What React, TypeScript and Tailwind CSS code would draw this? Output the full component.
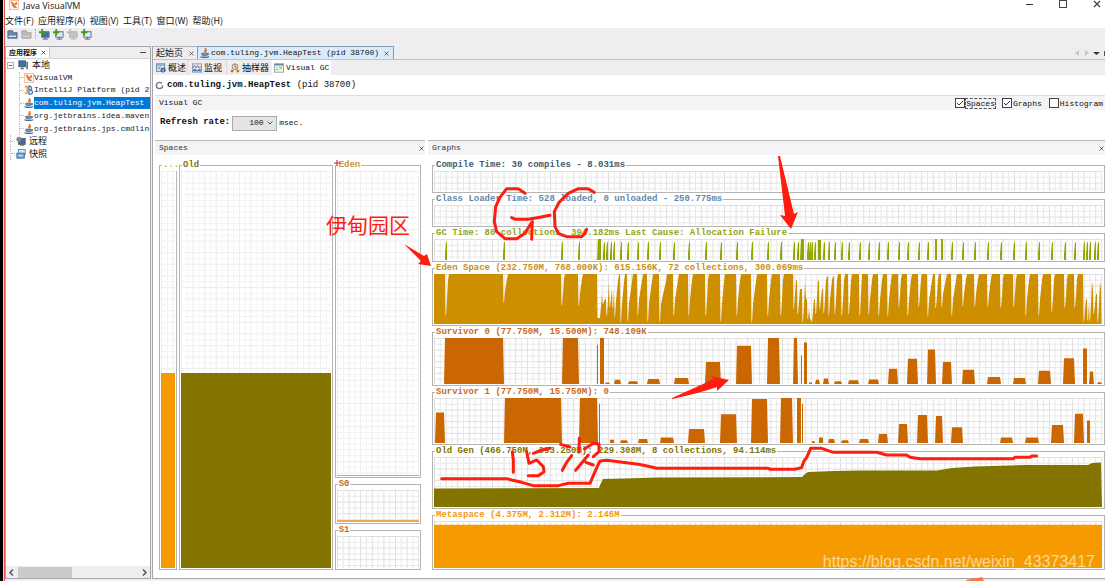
import type { ReactNode } from 'react';

const menus = ['文件(F)', '应用程序(A)', '视图(V)', '工具(T)', '窗口(W)', '帮助(H)'];

// depth of the free space, in percent from the top of the plot
const edenPoints = [
  [0, 0], [9, 0], [12, 83], [15, 0], [69, 0], [70, 57], [74, 0], [127, 0], [128, 63], [131, 0], [144, 0], [145, 63],
  [149, 0], [163, 0], [164, 88], [166, 88], [168, 39], [169, 60], [171, 50], [173, 84], [175, 17], [176, 66], [178, 29],
  [179, 68], [180, 32], [181, 86], [185, 0], [186, 0], [187, 97], [191, 0], [193, 0], [194, 95], [199, 0], [203, 0],
  [204, 83], [209, 0], [212, 0], [214, 95], [219, 0], [224, 0], [226, 96], [233, 0], [238, 0], [240, 83], [245, 0],
  [253, 0], [255, 83], [259, 0], [270, 0], [272, 83], [275, 0], [285, 0], [287, 95], [291, 0], [301, 0], [303, 83],
  [307, 0], [317, 0], [318, 97], [323, 0], [332, 0], [334, 83], [338, 0], [346, 0], [347, 83], [350, 0], [358, 0],
  [360, 70], [363, 14], [364, 80], [366, 30], [369, 97], [372, 50], [374, 90], [375, 70], [376, 88], [378, 97],
  [380, 50], [382, 80], [385, 15], [386, 70], [388, 30], [390, 78], [393, 5], [395, 83], [399, 5], [401, 80], [404, 0],
  [407, 0], [408, 83], [411, 0], [413, 0], [415, 80], [418, 0], [424, 0], [426, 83], [428, 0], [433, 0], [435, 80],
  [439, 0], [444, 0], [445, 83], [449, 0], [453, 0], [454, 83], [458, 0], [463, 0], [465, 67], [468, 0], [473, 0],
  [474, 83], [478, 0], [483, 0], [485, 65], [488, 0], [493, 0], [494, 85], [499, 0], [501, 0], [502, 68], [505, 0],
  [507, 0], [508, 65], [513, 0], [517, 0], [518, 83], [523, 0], [527, 0], [529, 65], [533, 0], [539, 0], [541, 65],
  [545, 0], [553, 0], [554, 65], [558, 0], [566, 0], [567, 67], [570, 0], [578, 0], [580, 65], [583, 0], [591, 0],
  [592, 83], [596, 0], [604, 0], [605, 83], [609, 0], [616, 0], [618, 75], [621, 0], [629, 0], [631, 67], [634, 0],
  [640, 0], [641, 67], [644, 0], [649, 0], [650, 95], [652, 50], [654, 93], [655, 55], [656, 95], [659, 30], [660, 80],
  [662, 40], [664, 97], [667, 30], [668, 100],
];

const oldPoints = [
  [0, 63], [165, 62], [166, 56], [169, 44], [190, 43], [224, 41], [368, 40], [371, 34], [374, 30], [400, 28], [426, 27],
  [503, 27], [518, 22], [541, 19], [591, 16], [654, 16], [658, 12], [667, 11], [668, 100],
];

const gcSpikes = [
  12, 70, 128, 145, 170, 173, 177, 180, 187, 194, 204, 214, 226, 240, 255, 272, 287, 303, 318, 334, 347, 360, 364, 374,
  376, 378, 381, 386, 390, 395, 401, 408, 415, 426, 435, 445, 454, 465, 474, 485, 494, 502, 508, 518, 529, 541, 554,
  567, 580, 592, 605, 618, 631, 641, 650, 653, 656, 661, 664,
];

// [from, to, height %]
const survivor0 = [
  [10, 70, 100], [128, 145, 100], [163, 164, 85], [166, 170, 100], [171, 176, 3], [180, 187, 9], [194, 204, 6],
  [213, 226, 11], [240, 255, 13], [271, 287, 48], [302, 318, 83], [333, 346, 100], [359, 364, 100], [367, 368, 62],
  [370, 373, 90], [375, 378, 3], [381, 386, 9], [389, 395, 12], [400, 408, 6], [414, 425, 8], [434, 445, 10],
  [454, 464, 33], [473, 484, 55], [493, 502, 75], [508, 518, 48], [528, 541, 31], [553, 567, 15], [579, 592, 13],
  [604, 617, 29], [629, 641, 56], [649, 653, 77], [655, 660, 27], [663, 668, 4],
];

const survivor1 = [
  [1, 11, 68], [70, 128, 100], [145, 164, 100], [165, 166, 87], [176, 180, 7], [186, 194, 6], [204, 214, 9],
  [226, 240, 12], [254, 271, 31], [286, 303, 64], [317, 334, 98], [346, 359, 100], [363, 367, 100], [368, 369, 87],
  [378, 381, 4], [385, 389, 12], [394, 401, 9], [407, 415, 6], [425, 435, 9], [444, 454, 20], [464, 474, 42],
  [483, 494, 62], [501, 509, 60], [517, 529, 35], [566, 579, 12], [591, 605, 12], [617, 630, 40], [640, 650, 65],
  [653, 656, 50],
];

function area(points: number[][]) {
  return `M0 100 ${points.map(([x, y]) => `L${x} ${y}`).join(' ')} L668 100 Z`;
}

// a collection empties eden at once, then it fills again quickly
function sawtooth(points: number[][]) {
  const parts = points.map(([x, y], i) => {
    const [px, py] = points[i - 1] ?? [x, y];
    if (y > py + 20) return `L${x - 1} ${py} L${x - 0.5} ${y} L${x} ${y}`;
    if (py > y + 40 && x - px > 2) return `L${px + 1} ${Math.round(py * 0.62)} L${x - 1} ${Math.round(py * 0.15)} L${x} ${y}`;
    return `L${x} ${y}`;
  });
  return `M0 100 ${parts.join(' ')} L668 100 Z`;
}

function bars(data: number[][]) {
  return data
    .map(([a, b, h]) => {
      const slope = b - a > 4 ? 1 : 0;
      return `M${a} 100 L${a + slope} ${100 - h} H${b - slope} L${b} 100 Z`;
    })
    .join(' ');
}

function spikes(xs: number[]) {
  const thin = xs.map((x) => `M${x - 1} 100 V70 L${x} 15 H${x + 1} V100 Z`).join(' ');
  return `${thin} M163 100 L164 0 H167 V100 Z M366 100 L367 0 H370 V100 Z M384 100 V5 H387 V100 Z M501 100 V0 H503 V100 Z M507 100 V0 H509 V100 Z`;
}

type PlotProps = { id: string; className: string; faint?: boolean; children?: ReactNode };

function Plot({ id, className, faint, children }: PlotProps) {
  return (
    <div className={`grid ${className}`}>
      <svg className="h-full w-full min-w-0 [grid-area:1/1]" aria-hidden="true">
        <defs>
          <pattern id={id} width="11.6" height="11.6" patternUnits="userSpaceOnUse">
            <path d="M.5 0V11.6M0 .5H11.6" stroke={faint ? '#ededed' : '#dedede'} fill="none" />
            <path d="M6.3 0V11.6M0 6.3H11.6" stroke={faint ? '#f3f3f3' : '#e9e9e9'} fill="none" />
          </pattern>
        </defs>
        <rect width="100%" height="100%" fill={`url(#${id})`} />
      </svg>
      {children}
    </div>
  );
}

function Series({ d, fill }: { d: string; fill: string }) {
  return (
    <svg className="h-full w-full min-w-0 [grid-area:1/1]" viewBox="0 0 669 100" preserveAspectRatio="none">
      <path d={d} fill={fill} />
    </svg>
  );
}

type BoxProps = { title: string; color: string; className?: string; children: ReactNode };

function Box({ title, color, className = '', children }: BoxProps) {
  return (
    <fieldset className={`min-w-0 border border-[#b4b4b4] px-px pb-px ${className}`}>
      <legend className={`ml-px px-px text-[9px] leading-3 font-bold whitespace-nowrap ${color}`}>{title}</legend>
      {children}
    </fieldset>
  );
}

const JavaIcon = () => (
  <svg className="size-[10px] shrink-0" viewBox="0 0 12 12" fill="none">
    <path d="M6 0C8.500 2 4 3 6.500 5.500M8 2C6.500 3 7 4 7.500 5" stroke="#e8701c" strokeWidth="1.600" />
    <path d="M2 6H9V8.500Q8 10 5.500 10Q3 10 2 8.500Z" fill="#6f8fae" stroke="#456b8f" strokeWidth=".6" />
    <path d="M9 6.500Q11.500 6.500 9 8.500M0.500 10.500Q5.500 12.500 11 10.500" stroke="#456b8f" strokeWidth="1.300" />
  </svg>
);

const VisualVmIcon = () => (
  <svg className="size-[10px] shrink-0" viewBox="0 0 12 12">
    <rect x=".5" y=".5" width="11" height="11" fill="#fff3ea" stroke="#f0b690" />
    <path d="M2 2L5 9L7 6L10 5L9 2L6 5L4 2Z" fill="#ef6a21" />
    <path d="M5 9L10 10L7 6Z" fill="#7d92a8" />
  </svg>
);

const IdeaIcon = () => (
  <svg className="size-[10px] shrink-0" viewBox="0 0 12 12" fill="none">
    <path d="M1 2H4V8Q4 10 1 10" stroke="#f09a28" strokeWidth="2" />
    <path d="M6 1V11H8Q11 10 10 8Q10 6 7 6Q10 5 9 3Q8 1 6 1Z" stroke="#3a72bd" strokeWidth="1.500" />
  </svg>
);

const HostIcon = () => (
  <svg className="size-[10px] shrink-0" viewBox="0 0 12 12">
    <rect x="1" y="1" width="8" height="7" fill="#2f77b7" stroke="#47545f" />
    <path d="M10 2H12V11H10ZM3 9H7V11H3Z" fill="#65717c" />
  </svg>
);

const RemoteIcon = () => (
  <svg className="size-[10px] shrink-0" viewBox="0 0 12 12">
    <rect x="3" y="3" width="8" height="7" fill="#3e6d98" stroke="#535d66" />
    <circle cx="3.500" cy="4" r="3" fill="#7d8a94" />
    <path d="M5 11H10" stroke="#444" />
  </svg>
);

const SnapshotIcon = () => (
  <svg className="size-[10px] shrink-0" viewBox="0 0 12 12">
    <rect x="3" y=".5" width="8" height="6" fill="#d7e6f5" stroke="#4c7eb0" />
    <rect x="1" y="5" width="9" height="6" fill="#7ba4cd" stroke="#3e6b99" />
    <path d="M3 8H8" stroke="#fff" />
  </svg>
);

const OverviewIcon = () => (
  <svg className="size-[10px] shrink-0" viewBox="0 0 12 12">
    <rect x=".5" y="1" width="10" height="9" fill="#e3edf7" stroke="#55789e" />
    <path d="M1 2.500H10M2 5H6M2 7H5" stroke="#55789e" />
    <circle cx="8.500" cy="8.500" r="3" fill="#2c62a8" />
    <path d="M8.500 7V10.500" stroke="#fff" />
  </svg>
);

const MonitorIcon = () => (
  <svg className="size-[10px] shrink-0" viewBox="0 0 12 12">
    <rect x=".5" y="1" width="11" height="10" fill="#dbe8f5" stroke="#7b97b5" />
    <path d="M1 6L3 3L5 6L7 3L9 6L11 4" stroke="#d33b31" fill="none" />
    <path d="M1 10V8L4 7L6 9L9 7L11 8V10Z" fill="#3e7ac0" />
  </svg>
);

const SamplerIcon = () => (
  <svg className="size-[10px] shrink-0" viewBox="0 0 12 12">
    <circle cx="6" cy="4.500" r="3.500" fill="#f6e4b7" stroke="#8c7650" />
    <path d="M1 11V8H4V11ZM8 11V8H11V11Z" fill="#b57521" />
    <path d="M6 2V5L8 6" stroke="#52637a" fill="none" />
  </svg>
);

const GcIcon = () => (
  <svg className="size-[10px] shrink-0" viewBox="0 0 12 12">
    <rect x=".5" y="1" width="11" height="10" fill="#f8fbe9" stroke="#7f95a8" />
    <path d="M1 2H11" stroke="#5e88ad" strokeWidth="2" />
    <path d="M2 5H5M6 7H10" stroke="#e4b521" />
    <path d="M6 5H10M2 8H5" stroke="#64a34a" />
  </svg>
);

const DiskIcon = ({ muted }: { muted?: boolean }) => (
  <svg className="size-[11px]" viewBox="0 0 12 12">
    <path d="M1 2H6L7 4H11V10H1Z" fill={muted ? '#b9b9b9' : '#6489ad'} stroke={muted ? '#a8a8a8' : '#4c6b88'} />
    <path d="M2 8H10" stroke={muted ? '#d5d5d5' : '#d5e5f4'} strokeWidth="1.500" />
  </svg>
);

const AddIcon = ({ muted, light }: { muted?: boolean; light?: boolean }) => (
  <svg className="size-[11px]" viewBox="0 0 12 12">
    <rect x="3" y="3" width="8" height="6" fill={muted ? '#c5c5c5' : light ? '#dfe9f3' : '#3c73a8'} stroke={muted ? '#b0b0b0' : '#52718f'} />
    <path d="M4 11H10M7 9V11" stroke={muted ? '#b0b0b0' : '#4b6073'} />
    <path d="M3.500 0V7M0 3.500H7" stroke={muted ? '#bbb' : '#4a9a22'} strokeWidth="2" />
  </svg>
);

const Cross = ({ className = 'size-[5px]' }: { className?: string }) => (
  <svg className={className} viewBox="0 0 8 8">
    <path d="M1 1L7 7M7 1L1 7" stroke="#444" strokeWidth="1.300" />
  </svg>
);

const processes = [
  { icon: <VisualVmIcon />, label: 'VisualVM' },
  { icon: <IdeaIcon />, label: 'IntelliJ Platform (pid 2' },
  { icon: <JavaIcon />, label: 'com.tuling.jvm.HeapTest', selected: true },
  { icon: <JavaIcon />, label: 'org.jetbrains.idea.maven' },
  { icon: <JavaIcon />, label: 'org.jetbrains.jps.cmdlin' },
];

function Sidebar() {
  return (
    <aside className="flex w-[146px] shrink-0 flex-col border border-[#a5a5ab] bg-white">
      <div className="flex h-3 shrink-0 items-center justify-between border-b border-[#d5d5d8] bg-[#efedf0] pr-1">
        <div className="flex h-full items-center gap-1 border-r border-[#c5c5c8] bg-white px-[3px]">
          <span className="font-['Noto_Sans_CJK_SC',sans-serif] text-[7px] leading-none font-bold">应用程序</span>
          <button aria-label="关闭"><Cross /></button>
        </div>
        <button aria-label="最小化" className="h-px w-[6px] bg-[#444]" />
      </div>
      <ul className="flex h-[101px] shrink-0 flex-col justify-between leading-3 whitespace-nowrap">
        <li className="flex h-3 items-center gap-1 pl-px">
          <svg className="size-[7px]" viewBox="0 0 8 8">
            <rect x=".5" y=".5" width="7" height="7" fill="#fff" stroke="#aaa" />
            <path d="M2 4H6" stroke="#555" />
          </svg>
          <HostIcon />
          <span className="font-['Noto_Sans_CJK_SC',sans-serif] text-[9px]">本地</span>
        </li>
        {processes.map((p) => (
          <li key={p.label} className="ml-[13px] flex h-3 items-center border-l border-dotted border-[#bbb]">
            <span className="w-1 shrink-0 border-t border-dotted border-[#bbb]" />
            {p.icon}
            <span className={p.selected ? 'grow bg-[#0078d7] text-[8px] text-white' : 'text-[8px] text-[#222]'}>
              {p.label}
            </span>
          </li>
        ))}
        <li className="ml-1 flex h-3 items-center border-l border-dotted border-[#bbb]">
          <span className="mr-px w-1 border-t border-dotted border-[#bbb]" />
          <RemoteIcon />
          <span className="ml-[3px] font-['Noto_Sans_CJK_SC',sans-serif] text-[9px]">远程</span>
        </li>
        <li className="ml-1 flex h-3 items-center border-l border-dotted border-[#bbb]">
          <span className="mr-px w-1 border-t border-dotted border-[#bbb]" />
          <SnapshotIcon />
          <span className="ml-[3px] font-['Noto_Sans_CJK_SC',sans-serif] text-[9px]">快照</span>
        </li>
      </ul>
      <div className="mt-auto flex h-3 shrink-0 items-center justify-between bg-[#efedf0] px-[3px]">
        <svg className="h-[7px] w-[5px]" viewBox="0 0 5 7"><path d="M4 .5L1 3.500L4 6.500" stroke="#555" strokeWidth="1.500" fill="none" /></svg>
        <div className="mr-auto ml-1 h-[11px] w-[54px] bg-[#cbcbcb]" />
        <svg className="h-[7px] w-[5px]" viewBox="0 0 5 7"><path d="M1 .5L4 3.500L1 6.500" stroke="#555" strokeWidth="1.500" fill="none" /></svg>
      </div>
    </aside>
  );
}

function Check({ label, checked, focused }: { label: string; checked?: boolean; focused?: boolean }) {
  return (
    <label className="flex items-center">
      <span className="grid size-[10px]">
        <input type="checkbox" defaultChecked={checked} className="peer size-[10px] appearance-none border border-[#444] bg-white [grid-area:1/1]" />
        <svg className="pointer-events-none invisible size-[10px] [grid-area:1/1] peer-checked:visible" viewBox="0 0 10 10">
          <path d="M2 5L4 7L8 3" stroke="#333" fill="none" />
        </svg>
      </span>
      <span className={focused ? 'border border-dashed border-[#555] leading-[9px]' : 'border border-transparent leading-[9px]'}>{label}</span>
    </label>
  );
}

function PaneHeader({ title }: { title: string }) {
  return (
    <header className="flex h-[15px] items-center justify-between border-t border-[#b5b5b8] bg-[#f4f4f6] pr-px pl-1 text-[8px] text-[#333]">
      <h2>{title}</h2>
      <button aria-label={`Close ${title}`}><Cross /></button>
    </header>
  );
}

function Spaces() {
  return (
    <section className="min-w-0 flex-[270]">
      <PaneHeader title="Spaces" />
      <div className="flex gap-[2px] pt-1 pr-1 pl-1">
        <Box title="..." color="text-[#d79b22]" className="flex-[14]">
          <Plot id="grid-meta" className="h-[397px]" faint>
            <div className="h-[195px] self-end bg-[#f59b00] [grid-area:1/1]" />
          </Plot>
        </Box>
        <Box title="Old" color="text-[#837400]" className="flex-[149]">
          <Plot id="grid-old" className="h-[397px]" faint>
            <div className="h-[195px] self-end bg-[#837400] [grid-area:1/1]" />
          </Plot>
        </Box>
        <div className="flex min-w-0 flex-[86] flex-col">
          <Box title="Eden" color="text-[#cf9a2c]">
            <Plot id="grid-eden" className="h-[305px]" faint>
              <div className="h-px self-end bg-[#d8b040] [grid-area:1/1]" />
            </Plot>
          </Box>
          <Box title="S0" color="text-[#c96a1c]">
            <Plot id="grid-s0" className="h-8">
              <div className="h-[2px] self-end bg-[#efa860] [grid-area:1/1]" />
            </Plot>
          </Box>
          <Box title="S1" color="text-[#c96a1c]">
            <Plot id="grid-s1" className="h-8" />
          </Box>
        </div>
      </div>
    </section>
  );
}

function Graphs() {
  return (
    <section className="min-w-0 flex-[677]">
      <PaneHeader title="Graphs" />
      <div className="pt-1 pl-1">
        <Box title="Compile Time: 30 compiles - 8.031ms" color="text-[#3f5b73]">
          <Plot id="grid-compile" className="h-5" />
        </Box>
        <Box title="Class Loader Time: 528 loaded, 0 unloaded - 250.775ms" color="text-[#5f88ad]">
          <Plot id="grid-loader" className="h-5" />
        </Box>
        <Box title="GC Time: 80 collections, 394.182ms Last Cause: Allocation Failure" color="text-[#93a413]">
          <Plot id="grid-gc" className="h-[21px]">
            <Series d={spikes(gcSpikes)} fill="#95a500" />
          </Plot>
        </Box>
        <Box title="Eden Space (232.750M, 768.000K): 615.156K, 72 collections, 300.069ms" color="text-[#cc8f14]">
          <Plot id="grid-eden-space" className="h-[50px]">
            <Series d={sawtooth(edenPoints)} fill="#cd8f00" />
          </Plot>
        </Box>
        <Box title="Survivor 0 (77.750M, 15.500M): 748.109K" color="text-[#c96a1c]">
          <Plot id="grid-survivor-0" className="h-[46px]">
            <Series d={bars(survivor0)} fill="#ca6700" />
          </Plot>
        </Box>
        <Box title="Survivor 1 (77.750M, 15.750M): 0" color="text-[#c96a1c]">
          <Plot id="grid-survivor-1" className="h-[45px]">
            <Series d={bars(survivor1)} fill="#ca6700" />
          </Plot>
        </Box>
        <Box title="Old Gen (466.750M, 393.250M): 229.308M, 8 collections, 94.114ms" color="text-[#837400]">
          <Plot id="grid-old-gen" className="h-[50px]">
            <Series d={area(oldPoints)} fill="#837400" />
          </Plot>
        </Box>
        <Box title="Metaspace (4.375M, 2.312M): 2.146M" color="text-[#f09a10]">
          <Plot id="grid-metaspace" className="h-[47px]">
            <Series d="M0 8H668V100H0Z" fill="#f59b00" />
          </Plot>
        </Box>
      </div>
    </section>
  );
}

// hand-drawn marks on top of the window
function Annotations() {
  return (
    <div className="pointer-events-none absolute inset-0">
      <svg className="absolute inset-0 h-full w-full" viewBox="0 0 1105 581" preserveAspectRatio="none" fill="none">
        <g stroke="#ff1d10" strokeWidth="9" strokeLinecap="round" strokeLinejoin="round">
          <g transform="translate(425 140) scale(.3333)">
            <path d="M300 160L280 146H245L225 172L212 200L208 245L215 275L240 296H275L300 280L315 255L322 245L320 298" />
            <path d="M260 233L272 238H310L345 232L375 226" />
            <path d="M508 157L488 146H460L430 160L402 187L388 215L390 260L400 280L425 290H470L480 280L485 268" />
          </g>
          <g transform="translate(425 325) scale(.3333)">
            <path d="M262 380L265 405V442M305 380L312 415L335 405L355 425L357 440L340 452H310M325 385L350 375L375 370" />
            <path d="M407 358L435 366M440 392L425 412L412 436M463 340L462 382M452 436L490 390M478 372L505 355L522 358V380L505 395M483 412L505 420" />
            <path d="M50 461H245L260 465L290 472L325 482H400L430 475H495L510 440L525 408L545 406L640 418L670 424L695 430H1030L1035 433H1110L1130 428L1137 408L1145 398L1157 370H1190L1225 382H1355L1385 390H1445L1455 397L1485 401H1765L1770 397H1815L1820 393H1835" />
          </g>
        </g>
        <g fill="#ff1d10">
          <path d="M778 156H780L794 214L798 212L791 229L780 215L785 216Z" />
          <path d="M404 244L424 256L427 254L431 266L418 264L421 261Z" />
          <path d="M672 398L714 379L711 376L729 380L717 391V387Q700 393 672 399Z" />
        </g>
        <path d="M334 163H340M337 160V166" stroke="#e01020" />
        <path d="M966 580L982 577L984 581H967Z" fill="#ff7440" />
      </svg>
      <span className="absolute top-[212px] left-[326px] font-['Noto_Sans_CJK_SC',sans-serif] text-[21px] leading-6 whitespace-nowrap text-[#ff1d10]">伊甸园区</span>
      <span className="absolute right-[10px] bottom-[9px] font-['Liberation_Sans',sans-serif] text-[16px] leading-5 text-white/60">
        https://blog.csdn.net/weixin_43373417
      </span>
    </div>
  );
}

export default function App() {
  return (
    <div className="relative flex min-h-screen overflow-hidden bg-[#f0eff1] font-['Liberation_Mono','Noto_Sans_CJK_SC',monospace] text-[#111]">
      <div className="w-[5px] shrink-0 border-r border-l-[3px] border-r-[#e0544c] border-l-black bg-[#ddd]" />
      <div className="flex min-w-0 grow flex-col">
        <div className="flex h-[14px] items-start justify-between bg-white pr-1 pl-1 font-['Open_Sans',sans-serif]">
          <div className="flex items-start gap-1">
            <VisualVmIcon />
            <h1 className="text-[9px] leading-3">Java VisualVM</h1>
          </div>
          <div className="flex h-2 items-center gap-[26px]">
            <button aria-label="Minimize" className="h-px w-[7px] bg-[#333]" />
            <button aria-label="Maximize" className="size-2 border border-[#444]" />
            <button aria-label="Close"><Cross className="size-2" /></button>
          </div>
        </div>
        <nav className="flex h-[14px] items-center gap-1 bg-white font-['Noto_Sans_CJK_SC',sans-serif] text-[9px]">
          {menus.map((m) => (
            <button key={m} className="whitespace-nowrap">{m}</button>
          ))}
        </nav>
        <div className="flex h-[18px] items-start gap-[3px] bg-[#efedf0] pt-px pl-[2px]">
          <button aria-label="Load"><DiskIcon /></button>
          <button aria-label="Save"><DiskIcon muted /></button>
          <span className="h-[10px] w-px border-l border-dotted border-[#aaa]" />
          <button aria-label="Add host"><AddIcon /></button>
          <button aria-label="Add JMX"><AddIcon light /></button>
          <button aria-label="Add dump"><AddIcon muted /></button>
          <button aria-label="Add snapshot"><AddIcon light /></button>
        </div>

        <div className="flex grow gap-px pb-[2px]">
          <Sidebar />

          <main className="flex min-w-0 grow flex-col border-b border-l border-[#a5a5ab] bg-white">
            {/* Document tabs */}
            <div className="flex h-[14px] shrink-0 items-center justify-between border-b border-[#c5c5c8] bg-[#efedf0] whitespace-nowrap">
              <div className="flex h-full">
                <button className="flex items-center gap-[6px] border-t border-[#b5b5b8] pr-[3px] pl-[3px] font-['Noto_Sans_CJK_SC',sans-serif] text-[9px] leading-3">
                  起始页 <Cross />
                </button>
                <button className="flex items-center gap-px border border-b-0 border-[#7f9db9] bg-[#dcebfa] pr-1 pl-[2px] text-[8px]">
                  <JavaIcon />
                  <span className="pr-1">com.tuling.jvm.HeapTest (pid 38700)</span>
                  <Cross />
                </button>
              </div>
              <svg className="h-2 w-8" viewBox="0 0 32 8">
                <path d="M6 1V7L2 4ZM12 1V7L16 4Z" fill="#c5c5c8" />
                <path d="M20 3H27L23.500 6Z" fill="#333" />
                <path d="M31 2H32V7H31Z" fill="#555" />
              </svg>
            </div>

            {/* View tabs */}
            <div className="flex h-[15px] shrink-0 bg-[#efedf0] pl-[2px] font-['Noto_Sans_CJK_SC',sans-serif] text-[9px] leading-3 whitespace-nowrap">
              <button className="flex items-center gap-[2px] border-r border-[#ddd] px-px"><OverviewIcon />概述</button>
              <button className="flex items-center gap-[2px] border-r border-[#ddd] px-1"><MonitorIcon />监视</button>
              <button className="flex items-center gap-[2px] px-[3px]"><SamplerIcon />抽样器</button>
              <button className="flex items-center gap-[2px] bg-white px-[2px] font-['Liberation_Mono',monospace] text-[8px]"><GcIcon />Visual GC</button>
            </div>

            <div className="flex h-5 shrink-0 items-center gap-[3px] pt-px pl-[2px] text-[9px]">
              <svg className="size-[9px]" viewBox="0 0 10 10">
                <circle cx="5" cy="5" r="3.500" fill="none" stroke="#777" strokeWidth="1.500" strokeDasharray="19 3" />
              </svg>
              <h2><b>com.tuling.jvm.HeapTest</b> (pid 38700)</h2>
            </div>

            <div className="ml-[2px] flex h-[15px] shrink-0 items-center justify-between border-t border-[#ddd] bg-[#f4f4f6] pl-1 text-[8px]">
              <span>Visual GC</span>
              <div className="flex gap-[6px] pr-px">
                <Check label="Spaces" checked focused />
                <Check label="Graphs" checked />
                <Check label="Histogram" />
              </div>
            </div>

            <div className="flex h-[30px] shrink-0 items-center gap-[2px] pb-1 pl-[7px] text-[9px]">
              <label htmlFor="rate" className="font-bold">Refresh rate:</label>
              <span className="grid h-[15px] w-[45px] items-center">
                <select id="rate" defaultValue="100" className="h-[15px] w-full appearance-none border border-[#aaa] bg-[#e4e4e4] pl-4 text-[8px] [grid-area:1/1]">
                  <option>100</option>
                  <option>200</option>
                  <option>500</option>
                </select>
                <svg className="pointer-events-none mr-1 h-1 w-[6px] justify-self-end [grid-area:1/1]" viewBox="0 0 6 4">
                  <path d="M.5 .5L3 3L5.500 .5" stroke="#555" fill="none" />
                </svg>
              </span>
              <span className="text-[8px]">msec.</span>
            </div>

            <div className="flex gap-[3px] pb-[7px] pl-[2px]">
              <Spaces />
              <Graphs />
            </div>
          </main>
        </div>
      </div>
      <Annotations />
    </div>
  );
}
